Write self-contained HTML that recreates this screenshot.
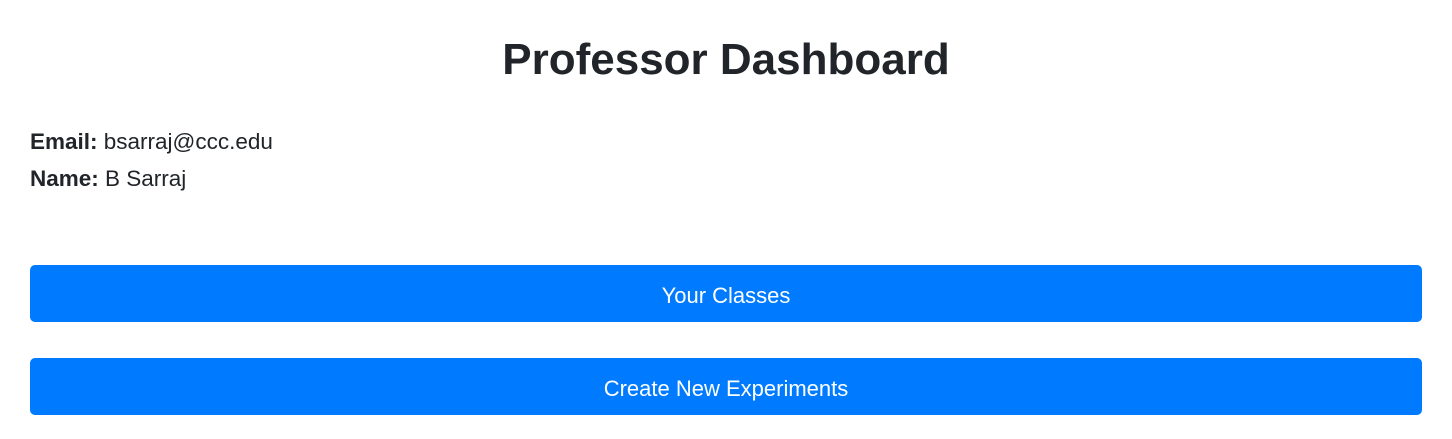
<!DOCTYPE html>
<html><head><style>
body{margin:0;background:#fff;font-family:"Liberation Sans",sans-serif;color:#212529;width:1452px;height:439px;overflow:hidden}
h1{position:absolute;top:32px;left:0;width:1452px;text-align:center;margin:0;font-size:44px;font-weight:bold;line-height:56px}
.info{position:absolute;left:30px;font-size:22.5px;line-height:28px}
.btn{position:absolute;left:30px;width:1392px;height:57px;background:#007bff;border-radius:5px;color:#fff;font-size:22px;display:flex;align-items:center;justify-content:center;padding-top:5px;box-sizing:border-box}
</style></head><body>
<h1>Professor Dashboard</h1>
<div class="info" style="top:128px"><b>Email:</b> bsarraj@ccc.edu</div>
<div class="info" style="top:165px"><b>Name:</b> B Sarraj</div>
<div class="btn" style="top:265px">Your Classes</div>
<div class="btn" style="top:358px">Create New Experiments</div>
</body></html>
